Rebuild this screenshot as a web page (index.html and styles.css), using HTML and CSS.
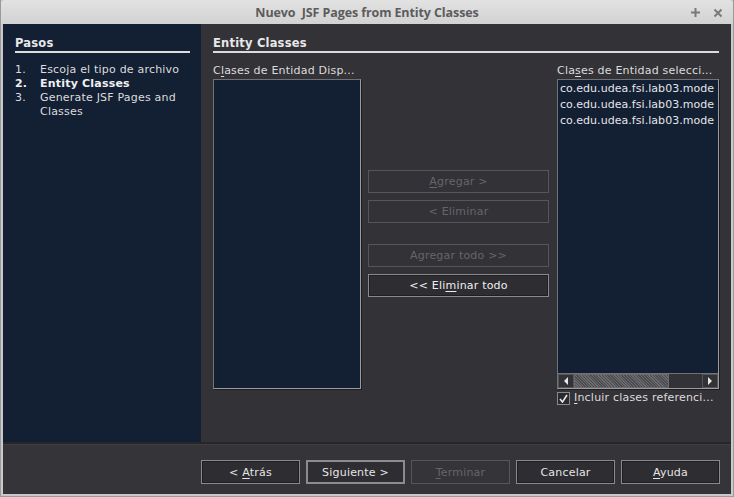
FILE: index.html
```html
<!DOCTYPE html>
<html>
<head>
<meta charset="utf-8">
<link rel="stylesheet" href="styles.css">
</head>
<body>
<div class="window">
  <div class="titlebar">
    <span class="title">Nuevo &nbsp;JSF Pages from Entity Classes</span>
    <span class="tb-icons">
      <svg width="11" height="11" viewBox="0 0 11 11"><path d="M5.5 1 V10 M1 5.5 H10" stroke="#7a7a7a" stroke-width="2"/></svg>
      <svg width="10" height="10" viewBox="0 0 10 10"><path d="M1.5 1.5 L8.5 8.5 M8.5 1.5 L1.5 8.5" stroke="#7a7a7a" stroke-width="2"/></svg>
    </span>
  </div>
  <div class="main">
    <div class="steps">
      <div class="heading">Pasos</div>
      <ol class="step-list">
        <li><span class="num">1.</span><span>Escoja el tipo de archivo</span></li>
        <li class="current"><span class="num">2.</span><span>Entity Classes</span></li>
        <li><span class="num">3.</span><span>Generate JSF Pages and Classes</span></li>
      </ol>
    </div>
    <div class="content">
      <div class="heading">Entity Classes</div>
      <div class="columns">
        <div class="col-left">
          <div class="lbl">C<u>l</u>ases de Entidad Disp...</div>
          <div class="listbox"></div>
        </div>
        <div class="col-mid">
          <div class="btn disabled"><span><u>A</u>gregar &gt;</span></div>
          <div class="btn disabled"><span>&lt; Eliminar</span></div>
          <div class="btn disabled gap"><span>Agregar todo &gt;&gt;</span></div>
          <div class="btn"><span>&lt;&lt; Eli<u>m</u>inar todo</span></div>
        </div>
        <div class="col-right">
          <div class="lbl">Cla<u>s</u>es de Entidad selecci...</div>
          <div class="listbox right">
            <div class="items">
              <div class="item">co.edu.udea.fsi.lab03.mode</div>
              <div class="item">co.edu.udea.fsi.lab03.mode</div>
              <div class="item">co.edu.udea.fsi.lab03.mode</div>
            </div>
            <div class="hscroll">
              <div class="arrow"><svg width="6" height="8" viewBox="0 0 6 8"><path d="M5 0 L1 4 L5 8 Z" fill="#e6e6e6"/></svg></div>
              <div class="thumb"></div>
              <div class="track"></div>
              <div class="arrow"><svg width="6" height="8" viewBox="0 0 6 8"><path d="M1 0 L5 4 L1 8 Z" fill="#e6e6e6"/></svg></div>
            </div>
          </div>
          <div class="check">
            <span class="box"><svg width="9" height="9" viewBox="0 0 9 9"><path d="M1 5 L3.5 8 L8 1" stroke="#e8e8e8" stroke-width="1.6" fill="none"/></svg></span>
            <span><u>I</u>ncluir clases referenci...</span>
          </div>
        </div>
      </div>
    </div>
  </div>
  <div class="bottombar">
    <div class="bbtn"><span>&lt; <u>A</u>trás</span></div>
    <div class="bbtn focused"><span>Siguiente &gt;</span></div>
    <div class="bbtn disabled"><span><u>T</u>erminar</span></div>
    <div class="bbtn"><span>Cancelar</span></div>
    <div class="bbtn"><span><u>A</u>yuda</span></div>
  </div>
</div>
</body>
</html>
```
FILE: styles.css
```css
* { box-sizing: border-box; }
html, body { margin: 0; padding: 0; background: #c8c8c8; }
body { width: 734px; height: 497px; overflow: hidden; font-family: "DejaVu Sans", sans-serif; font-size: 11px; letter-spacing: 0.2px; color: #dcdcdc; }
u { text-decoration: underline; text-underline-offset: 2px; }

.window {
  width: 734px; height: 497px;
  background: #c9c9c9;
  border: 1px solid #9a9a9a;
  border-top: none;
  display: flex; flex-direction: column;
  padding: 0 2px 2px 2px;
}
.titlebar {
  height: 24px;
  margin: 0 -2px;
  background: linear-gradient(#e2e2e2, #d2d2d2);
  display: flex; align-items: center; justify-content: center;
  position: relative;
  border-radius: 4px 4px 0 0;
}
.title { font-family: "Open Sans", sans-serif; font-weight: 700; font-size: 12.5px; color: #5c5c5c; letter-spacing: -0.1px; }
.tb-icons { position: absolute; right: 10px; top: 7px; display: flex; gap: 12px; align-items: center; }

.main { height: 418px; display: flex; }
.steps { width: 198px; background: #131f33; padding: 12px 11px 0 12px; }
.heading {
  font-weight: 700; font-size: 11.5px; color: #e8e8e8;
  padding-bottom: 1px;
  border-bottom: 2px solid #dcdcdc;
  line-height: 14px;
}
.step-list { list-style: none; margin: 10px 0 0 0; padding: 0; }
.step-list li { display: flex; line-height: 14px; }
.step-list .num { width: 25px; flex: none; }
.step-list .current { font-weight: 700; color: #f0f0f0; }

.content { flex: 1; background: #333237; padding: 12px 12px 0 12px; }
.columns { display: flex; margin-top: 11px; }
.lbl { line-height: 14px; height: 15px; white-space: nowrap; }
.col-left { width: 148px; }
.listbox {
  background: #131f33;
  border: 1px solid #6f7277;
  border-right-color: #9a9ca0; border-bottom-color: #9a9ca0;
  height: 310px;
  box-shadow: 1px 1px 0 #1c1b1f;
}
.col-mid { width: 181px; margin-left: 7px; padding-top: 106px; display: flex; flex-direction: column; gap: 7px; }
.btn {
  height: 23px; border: 1px solid #8a8a8d; background: #2e2d32;
  display: flex; align-items: center; justify-content: center; color: #eeeeee;
  box-shadow: inset 0 0 0 1px #1f1e22;
}
.btn.disabled { border-color: #55555a; color: #66666a; background: transparent; box-shadow: none; }
.btn.gap { margin-top: 14px; }
.col-right { width: 162px; margin-left: 8px; }
.listbox.right { display: flex; flex-direction: column; overflow: hidden; }
.items { flex: 1; padding: 1px 0 0 2px; overflow: hidden; }
.item { line-height: 16px; white-space: nowrap; color: #e6e6e6; letter-spacing: 0.05px; }
.hscroll { height: 15px; display: flex; background: #333237; border-top: 1px solid #6f7277; }
.arrow { width: 16px; display: flex; align-items: center; justify-content: center; background: #333237; border: 1px solid #55555a; }
.thumb {
  width: 95px;
  background: repeating-linear-gradient(45deg, #6b6b6e 0 1px, #4c4c50 1px 2px);
  border: 1px solid #6a6a6e;
}
.track { flex: 1; background: #333237; }
.check { display: flex; align-items: center; gap: 4px; margin-top: 2px; line-height: 14px; white-space: nowrap; }
.box { width: 13px; height: 13px; border: 1px solid #8a8a8d; background: #2a292d; display: flex; align-items: center; justify-content: center; }

.bottombar {
  flex: 1;
  background: #353438;
  border-top: 2px solid #26252a;
  box-shadow: inset 0 1px 0 #3f3e44;
  display: flex; justify-content: flex-end; align-items: flex-start;
  gap: 6px;
  padding: 16px 11px 0 0;
}
.bbtn {
  width: 99px; height: 24px;
  border: 1px solid #8a8a8d; background: #2e2d32;
  box-shadow: inset 0 0 0 1px #1f1e22;
  display: flex; align-items: center; justify-content: center; color: #e6e6e6;
}
.bbtn.focused { border: 2px solid #8c8c90; box-shadow: none; }
.bbtn.disabled { border-color: #55555a; color: #66666a; background: transparent; box-shadow: none; }
```
